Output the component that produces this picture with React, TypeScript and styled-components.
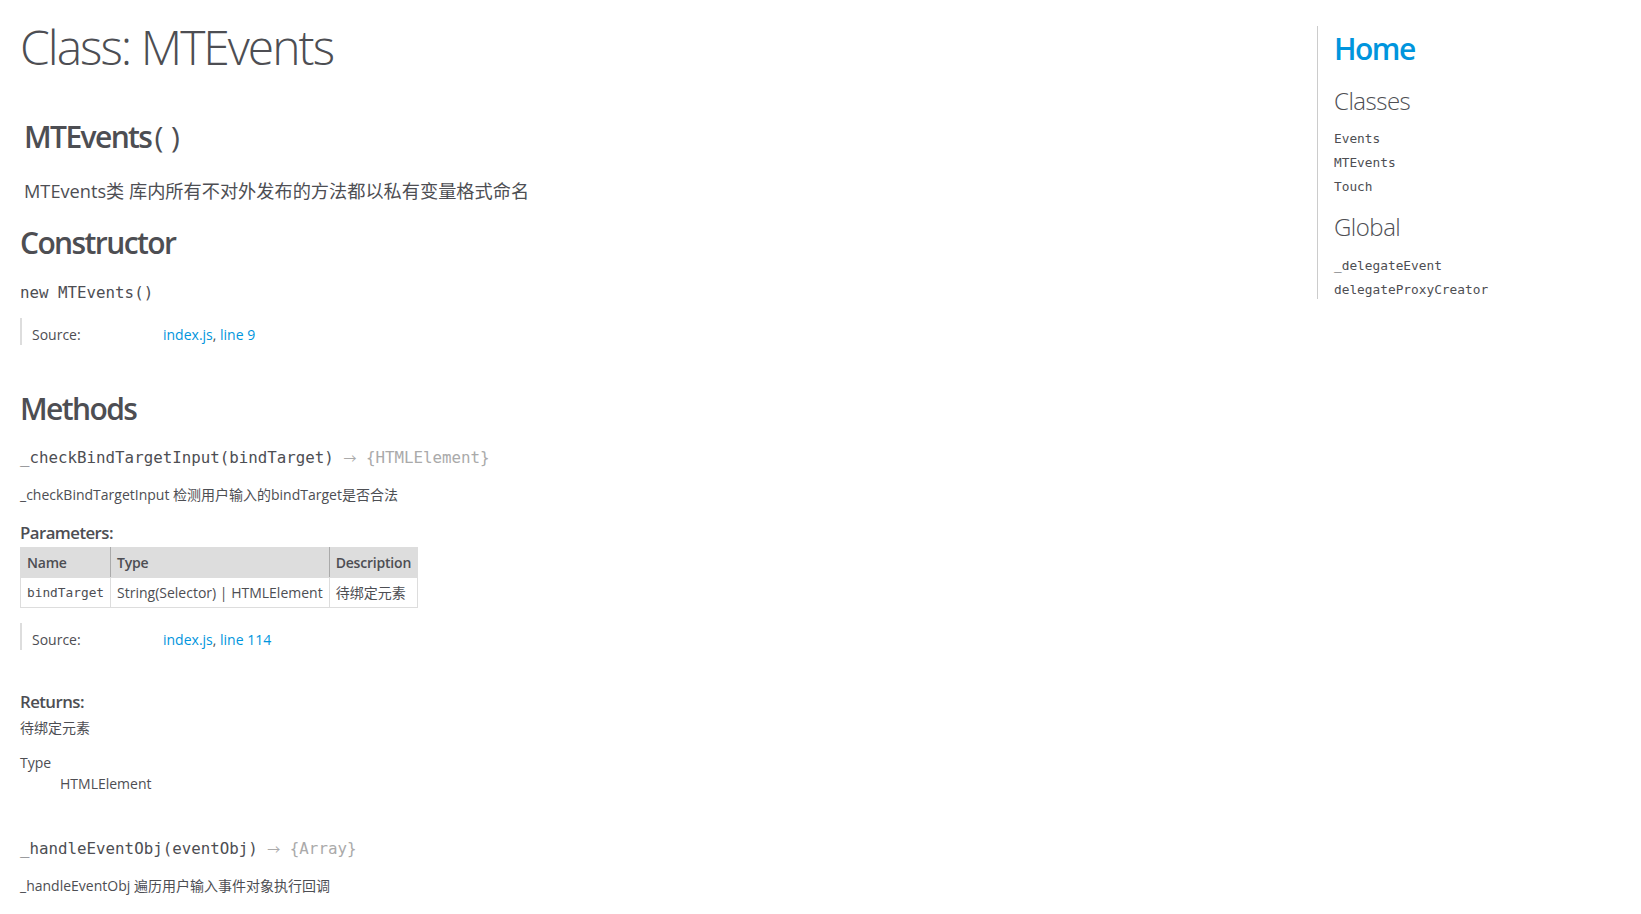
import React from 'react';
import styled, { createGlobalStyle } from 'styled-components';

const textColor = '#4d4e53';
const linkColor = '#0095dd';
const sans = `'Open Sans', 'Noto Sans CJK SC', sans-serif`;
const mono = `'DejaVu Sans Mono', 'Liberation Mono', monospace`;

const GlobalStyle = createGlobalStyle`
    html, body {
        margin: 0;
        background: #fff;
    }
    body {
        font-family: ${sans};
        font-size: 14px;
        line-height: 21px;
        color: ${textColor};
    }
`;

const Page = styled.div`
    display: flex;
    align-items: flex-start;
    padding: 8px;
`;
const Main = styled.main`
    flex: 1;
    padding-left: 12px;
`;
const PageTitle = styled.h1`
    margin: 9.5px 0 0;
    font-size: 48px;
    font-weight: 300;
    letter-spacing: -2px;
    line-height: 58px;
`;
const ClassHeader = styled.header`
    margin-top: 43px;
    padding: 0 4px;
`;
const SectionTitle = styled.h2<{ $top: number }>`
    margin: ${p => p.$top}px 0 0;
    font-size: 30px;
    font-weight: 600;
    letter-spacing: -1.6px;
    line-height: 36px;
`;
const Parens = styled.span`
    font-weight: 400;
    margin-left: 3px;
    letter-spacing: 0;
`;
const ClassDescription = styled.div`
    margin-top: 24px;
    font-size: 18.2px;
    line-height: 25.5px;
`;
const MethodName = styled.h4<{ $top: number }>`
    margin: ${p => p.$top}px 0 0;
    font-family: ${mono};
    font-size: 15.8px;
    font-weight: 400;
    line-height: 21px;
`;
const TypeSignature = styled.span`
    color: #aaa;
`;
const Arrow = styled.span`
    font-family: ${sans};
    font-size: 13px;
`;
const Description = styled.div<{ $top: number }>`
    margin-top: ${p => p.$top}px;
`;
const SubTitle = styled.h5<{ $top: number }>`
    margin: ${p => p.$top}px 0 0;
    font-size: 16.8px;
    font-weight: 600;
    letter-spacing: -0.55px;
    line-height: 21px;
`;
const Details = styled.dl<{ $top: number }>`
    display: grid;
    grid-template-columns: 131px auto;
    margin: ${p => p.$top}px 0 0;
    padding: 6px 0 0 10px;
    border-left: 2px solid #ddd;
    dt,
    dd {
        margin: 0;
    }
`;
const Link = styled.a`
    color: ${linkColor};
    text-decoration: none;
`;
const Params = styled.table`
    margin-top: 4px;
    border-spacing: 0;
    border-collapse: collapse;
    th,
    td {
        border: 1px solid #ddd;
        padding: 4px 6px;
        text-align: left;
        vertical-align: top;
    }
    thead tr {
        background: #ddd;
    }
    th {
        font-weight: 600;
        letter-spacing: -0.2px;
        border-right: 1px solid #aaa;
    }
    th:last-child {
        border-right: 1px solid #ddd;
    }
`;
const ParamName = styled.td`
    font-family: ${mono};
    font-size: 12.8px;
`;
const TypeLabel = styled.div`
    margin-top: 14px;
`;
const TypeValue = styled.div`
    padding-left: 40px;
`;

const Nav = styled.nav`
    box-sizing: border-box;
    width: 316px;
    margin-top: 18px;
    padding: 5px 0 0 16px;
    border-left: 1px solid #ccc;
`;
const HomeLink = styled.h2`
    margin: 0;
    font-size: 30px;
    font-weight: 600;
    letter-spacing: -1.5px;
    line-height: 36px;
    a {
        color: ${linkColor};
        text-decoration: none;
    }
`;
const NavTitle = styled.h3<{ $top: number }>`
    margin: ${p => p.$top}px 0 0;
    font-size: 24px;
    font-weight: 300;
    letter-spacing: -0.5px;
    line-height: 28.8px;
`;
const NavList = styled.ul<{ $top: number }>`
    margin: ${p => p.$top}px 0 0;
    padding: 0;
    list-style: none;
    li {
        margin-top: 6px;
        font-family: ${mono};
        font-size: 12.8px;
        line-height: 18px;
    }
    a {
        color: ${textColor};
        text-decoration: none;
    }
`;

const Source: React.FC<{ top: number; line: number }> = ({ top, line }) => (
    <Details $top={top}>
        <dt>Source:</dt>
        <dd>
            <Link href="#">index.js</Link>, <Link href="#">line {line}</Link>
        </dd>
    </Details>
);

const Signature: React.FC<{ top: number; name: string; args: string; ret: string }> = props => (
    <MethodName $top={props.top}>
        {props.name}({props.args})
        <TypeSignature>
            {' '}
            <Arrow>→</Arrow> {`{${props.ret}}`}
        </TypeSignature>
    </MethodName>
);

const App: React.FC = () => {
    return (
        <>
            <GlobalStyle />
            <Page>
                <Main>
                    <PageTitle>Class: MTEvents</PageTitle>
                    <ClassHeader>
                        <SectionTitle $top={0}>
                            MTEvents<Parens>( )</Parens>
                        </SectionTitle>
                        <ClassDescription>MTEvents类 库内所有不对外发布的方法都以私有变量格式命名</ClassDescription>
                    </ClassHeader>

                    <SectionTitle $top={21}>Constructor</SectionTitle>
                    <MethodName $top={20.5}>new MTEvents()</MethodName>
                    <Source top={15.5} line={9} />

                    <SectionTitle $top={45.5}>Methods</SectionTitle>
                    <Signature top={20.5} name="_checkBindTargetInput" args="bindTarget" ret="HTMLElement" />
                    <Description $top={15}>_checkBindTargetInput 检测用户输入的bindTarget是否合法</Description>
                    <SubTitle $top={17}>Parameters:</SubTitle>
                    <Params>
                        <thead>
                            <tr>
                                <th>Name</th>
                                <th>Type</th>
                                <th>Description</th>
                            </tr>
                        </thead>
                        <tbody>
                            <tr>
                                <ParamName>bindTarget</ParamName>
                                <td>String(Selector) | HTMLElement</td>
                                <td>待绑定元素</td>
                            </tr>
                        </tbody>
                    </Params>
                    <Source top={15} line={114} />
                    <SubTitle $top={41}>Returns:</SubTitle>
                    <Description $top={5}>待绑定元素</Description>
                    <TypeLabel>Type</TypeLabel>
                    <TypeValue>HTMLElement</TypeValue>

                    <Signature top={43.5} name="_handleEventObj" args="eventObj" ret="Array" />
                    <Description $top={15.5}>_handleEventObj 遍历用户输入事件对象执行回调</Description>
                </Main>
                <Nav>
                    <HomeLink>
                        <a href="#">Home</a>
                    </HomeLink>
                    <NavTitle $top={20}>Classes</NavTitle>
                    <NavList $top={14}>
                        <li><a href="#">Events</a></li>
                        <li><a href="#">MTEvents</a></li>
                        <li><a href="#">Touch</a></li>
                    </NavList>
                    <NavTitle $top={17}>Global</NavTitle>
                    <NavList $top={15}>
                        <li><a href="#">_delegateEvent</a></li>
                        <li><a href="#">delegateProxyCreator</a></li>
                    </NavList>
                </Nav>
            </Page>
        </>
    );
};

export default App;
